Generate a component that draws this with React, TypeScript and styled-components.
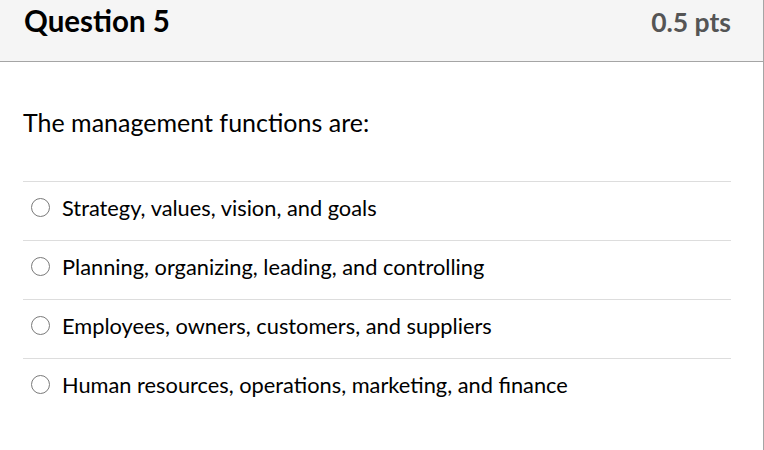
import React from "react";
import styled, { createGlobalStyle } from "styled-components";

const GlobalStyle = createGlobalStyle`
  html, body {
    margin: 0;
    padding: 0;
    background: #ffffff;
  }
  body {
    font-family: Lato, "Liberation Sans", sans-serif;
    color: #2d3b45;
  }
`;

const Card = styled.div`
  min-height: 450px;
  box-sizing: border-box;
  border-right: 1px solid #a5a5a5;
  background: #ffffff;
`;

const Header = styled.div`
  height: 62px;
  box-sizing: border-box;
  display: flex;
  align-items: baseline;
  justify-content: space-between;
  padding: 3px 32px 0 24px;
  background: #f5f5f5;
  border-bottom: 1px solid #a5a5a5;
`;

const Title = styled.h2`
  margin: 0;
  font-size: 29.5px;
  font-weight: 700;
  line-height: 1.2;
  color: #000000;
`;

const Points = styled.div`
  font-size: 26.5px;
  font-weight: 700;
  line-height: 1.2;
  color: #555555;
`;

const Body = styled.div`
  padding: 45px 32px 0 23px;
`;

const Prompt = styled.p`
  margin: 0 0 44px;
  font-size: 25px;
  line-height: 1.2;
  color: #000000;
`;

const Answers = styled.div`
  display: flex;
  flex-direction: column;
`;

const Answer = styled.label`
  height: 59px;
  box-sizing: border-box;
  display: flex;
  align-items: center;
  gap: 12px;
  padding: 0 0 7px 8px;
  border-top: 1px solid #dddddd;
  font-size: 21.8px;
  color: #000000;
  cursor: pointer;
`;

const Radio = styled.span`
  width: 19px;
  height: 19px;
  box-sizing: border-box;
  border-radius: 50%;
  border: 1px solid #7a7a7a;
  background: #ffffff;
  flex-shrink: 0;
`;

const answers = [
  "Strategy, values, vision, and goals",
  "Planning, organizing, leading, and controlling",
  "Employees, owners, customers, and suppliers",
  "Human resources, operations, marketing, and finance",
];

export default function App() {
  return (
    <>
      <GlobalStyle />
      <Card>
        <Header>
          <Title>Question 5</Title>
          <Points>0.5 pts</Points>
        </Header>
        <Body>
          <Prompt>The management functions are:</Prompt>
          <Answers>
            {answers.map(a => (
              <Answer key={a}>
                <Radio />
                <span>{a}</span>
              </Answer>
            ))}
          </Answers>
        </Body>
      </Card>
    </>
  );
}
